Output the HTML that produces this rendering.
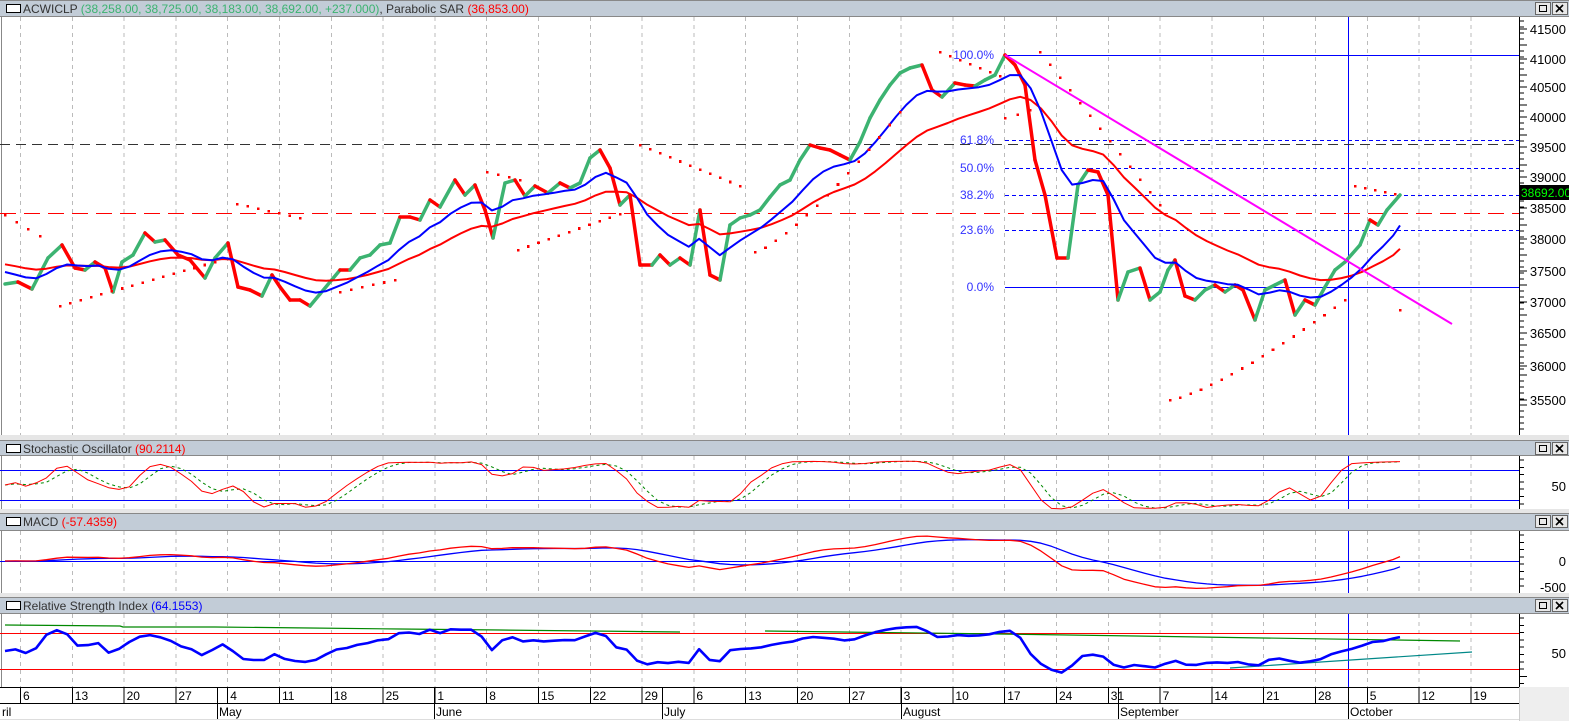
<!DOCTYPE html>
<html><head><meta charset="utf-8">
<style>
html,body{margin:0;padding:0;background:#fff;}
body{width:1569px;height:721px;overflow:hidden;font-family:"Liberation Sans",sans-serif;}
svg text{font-family:"Liberation Sans",sans-serif;}
</style></head><body>
<svg id="s" width="1569" height="721" xmlns="http://www.w3.org/2000/svg" shape-rendering="crispEdges">
<rect x="0" y="0" width="1569" height="721" fill="#fff"/>
</svg>
<script>
var NS="http://www.w3.org/2000/svg",S=document.getElementById('s');
function el(t,a,txt){var e=document.createElementNS(NS,t);for(var k in a)e.setAttribute(k,a[k]);if(txt!=null)e.textContent=txt;S.appendChild(e);return e;}
function line(x1,y1,x2,y2,c,w,d,sr){var a={x1:x1,y1:y1,x2:x2,y2:y2,stroke:c,'stroke-width':w||1};if(d)a['stroke-dasharray']=d;if(sr)a['shape-rendering']='auto';return el('line',a);}
function pl(pts,c,w,d){var a={points:pts.map(function(p){return p[0].toFixed(1)+','+p[1].toFixed(1)}).join(' '),fill:'none',stroke:c,'stroke-width':w,'stroke-linejoin':'round','shape-rendering':'auto'};if(d)a['stroke-dasharray']=d;return el('polyline',a);}
var AX=1519;
var panels=[[0,17,435],[440,456,509],[513,531,593],[597,614,687]];
var titles=[
 [['ACWICLP ','#333'],['(38,258.00, 38,725.00, 38,183.00, 38,692.00, +237.000)','#3cb371'],[', Parabolic SAR ','#333'],['(36,853.00)','#f00']],
 [['Stochastic Oscillator ','#333'],['(90.2114)','#f00']],
 [['MACD ','#333'],['(-57.4359)','#f00']],
 [['Relative Strength Index ','#333'],['(64.1553)','#00f']]];
el('rect',{x:0,y:435,width:1569,height:5,fill:'#e6e6e6'});
el('rect',{x:0,y:509,width:1569,height:4,fill:'#e6e6e6'});
el('rect',{x:0,y:593,width:1569,height:4,fill:'#e6e6e6'});
var ticks=[];for(var i=0;i<29;i++)ticks.push(20+i*51.8);
panels.forEach(function(p,i){
 var ht=p[0],pt=p[1],pb=p[2];
 el('rect',{x:0,y:ht,width:1569,height:pt-ht-1,fill:'#c2ccd7'});
 line(0,pt-0.5,1569,pt-0.5,'#888',1);
 line(0,ht+0.5,1569,ht+0.5,'#888',1);
 el('rect',{x:6.5,y:ht+4.5,width:14,height:8,fill:'#fff',stroke:'#000'});
 var t=el('text',{x:23,y:ht+13,'font-size':12});
 titles[i].forEach(function(s){var ts=document.createElementNS(NS,'tspan');ts.setAttribute('fill',s[1]);ts.textContent=s[0];t.appendChild(ts);});
 [1535,1552].forEach(function(bx,j){
  el('rect',{x:bx+0.5,y:ht+2.5,width:15,height:12,fill:'#e8e8e8',stroke:'#666'});
  if(j==0)el('rect',{x:bx+4.5,y:ht+5.5,width:7,height:6,fill:'none',stroke:'#000','stroke-width':1});
  else{line(bx+4,ht+5,bx+11,ht+12,'#000',1.6,null,1);line(bx+11,ht+5,bx+4,ht+12,'#000',1.6,null,1);}
 });
 ticks.forEach(function(x){line(x+0.5,pt,x+0.5,pb,'#bbb',1,'4,4');});
 line(1.5,pt,1.5,pb,'#888',1);
 line(AX+0.5,pt,AX+0.5,pb,'#000',1);
 for(var y=pt+4;y<pb;y+=(i==0?6:7.3))line(AX,y,AX+(((Math.round((y-pt)/6))%5==0)?8:5),y,'#000',1);
 line(1348.5,pt,1348.5,pb,'#00f',1);
});
[[41500,29],[41000,59],[40500,87],[40000,117],[39500,147],[39000,177],[38500,208],[38000,239],[37500,271],[37000,302],[36500,333],[36000,366],[35500,400]].forEach(function(a){
 line(AX,a[1],AX+8,a[1],'#000',1);
 el('text',{x:1566,y:a[1]+5,'font-size':13,'text-anchor':'end',fill:'#000'},a[0]);});
el('text',{x:1566,y:491,'font-size':13,'text-anchor':'end'},'50');
el('text',{x:1566,y:566,'font-size':13,'text-anchor':'end'},'0');
el('text',{x:1566,y:592,'font-size':13,'text-anchor':'end'},'-500');
el('text',{x:1566,y:658,'font-size':13,'text-anchor':'end'},'50');

line(0,144.5,AX,144.5,'#333',1,'10,6');
line(0,213.5,AX,213.5,'#f00',1.2,'16,8');
line(1005,55.5,AX,55.5,'#00f',1);
line(1005,287.5,AX,287.5,'#00f',1);
[140,168,195,230].forEach(function(y){line(1005,y+0.5,AX,y+0.5,'#00f',1,'4,3');});
[['100.0%',55],['61.8%',140],['50.0%',168],['38.2%',195],['23.6%',230],['0.0%',287]].forEach(function(a){
 el('text',{x:994,y:a[1]+4,'font-size':12,'text-anchor':'end',fill:'#33f'},a[0]);});

var P=[[5,284],[18,282],[32,289],[48,258],[62,245],[75,268],[85,270],[95,262],[105,268],[113,292],[122,262],[133,255],[145,233],[155,242],[165,240],[178,255],[190,260],[205,278],[215,258],[228,243],[238,287],[250,290],[262,296],[272,275],[280,287],[290,300],[300,300],[310,306],[320,294],[330,282],[340,270],[350,270],[360,258],[370,255],[380,245],[390,243],[400,217],[410,217],[420,220],[430,200],[440,207],[455,180],[465,195],[475,185],[485,210],[493,238],[505,183],[515,180],[525,196],[535,186],[548,193],[560,183],[570,188],[580,183],[590,158],[600,150],[610,168],[620,205],[630,195],[640,265],[652,265],[660,255],[670,265],[680,258],[690,265],[700,210],[710,275],[720,280],[730,225],[740,218],[750,215],[760,210],[770,197],[780,185],[790,180],[800,160],[810,145],[820,148],[830,150],[840,155],[850,160],[860,142],[870,118],[880,100],[890,85],[900,73],[910,68],[922,65],[932,90],[942,97],[955,83],[965,85],[975,86],[985,80],[995,75],[1005,55],[1015,65],[1025,85],[1035,160],[1045,195],[1057,258],[1068,258],[1078,185],[1088,170],[1098,172],[1108,195],[1118,300],[1128,272],[1140,268],[1150,300],[1160,292],[1168,270],[1175,260],[1185,296],[1195,300],[1205,290],[1215,285],[1225,292],[1235,285],[1243,290],[1255,320],[1265,290],[1275,285],[1285,280],[1295,315],[1305,300],[1315,305],[1325,287],[1335,270],[1345,262],[1360,245],[1370,220],[1378,225],[1387,210],[1400,195]];
for(var i=1;i<P.length;i++){
 var c=P[i][1]<P[i-1][1]?'#3cb371':'#f00';
 line(P[i-1][0],P[i-1][1],P[i][0],P[i][1],c,3.5,null,1).setAttribute('stroke-linecap','round');
}
function interp(x){for(var i=1;i<P.length;i++){if(x<=P[i][0]){var a=P[i-1],b=P[i];return a[1]+(b[1]-a[1])*(x-a[0])/(b[0]-a[0]);}}return P[P.length-1][1];}
var X=[],Y=[];for(var x=5;x<=1400.01;x+=10.36){X.push(x);Y.push(interp(x));}
X.push(1400);Y.push(195);
var N=X.length;
function ema(arr,n,init){var k=2/(n+1),o=[],v=init!=null?init:arr[0];for(var i=0;i<arr.length;i++){v=arr[i]*k+v*(1-k);o.push(v);}return o;}
var b=ema(Y,7,268),r=ema(Y,18,262);
pl(X.map(function(x,i){return [x,r[i]]}),'#f00',2);
pl(X.map(function(x,i){return [x,b[i]]}),'#00f',2);
line(1005,55,1452,324,'#f0f',2,null,1);
var segs=[[5,215,40,236],[60,306,215,262],[237,204,300,218],[340,292,395,280],[487,172,520,180],[518,250,620,214],[640,145,740,186],[755,252,900,112],[940,52,1000,76],[1005,118,1030,110],[1040,52,1160,205],[1170,400,1345,300],[1355,186,1395,194],[1400,310,1400,310]];
segs.forEach(function(s){
 var n=Math.max(1,Math.round((s[2]-s[0])/10.36));
 for(var j=0;j<=n;j++){var t=n?j/n:0;var x=s[0]+(s[2]-s[0])*t;var y=s[1]+(s[3]-s[1])*(s[1]>s[3]&&s[0]>=755&&s[0]<=1170?Math.pow(t,1.3):t);
  el('rect',{x:x-1.2,y:y-1.2,width:2.6,height:2.6,fill:'#f00'});}
});
el('rect',{x:1519,y:185,width:50,height:15,fill:'#000'});
el('text',{x:1521,y:197,'font-size':12,fill:'#0f0'},'38692.00');

var pr=Y.map(function(y){return 41000-(y-57)*16.7;});
var kr=[];for(var i=0;i<N;i++){var lo=1e9,hi=-1e9;for(var j=Math.max(0,i-13);j<=i;j++){lo=Math.min(lo,pr[j]-60);hi=Math.max(hi,pr[j]+60);}kr.push(100*(pr[i]-lo)/(hi-lo));}
function sma(a,n){return a.map(function(v,i){var s=0,c=0;for(var j=Math.max(0,i-n+1);j<=i;j++){s+=a[j];c++;}return s/c;});}
var K=sma(kr,3),D=sma(K,3);
function sy(v){return 510-v*0.5;}
line(0,470.5,AX,470.5,'#00f',1);line(0,500.5,AX,500.5,'#00f',1);
pl(X.map(function(x,i){return [x,sy(D[i])]}),'#080',1,'3,3');
pl(X.map(function(x,i){return [x,sy(K[i])]}),'#f00',1);
var e12=ema(pr,12,pr[0]),e26=ema(pr,26,pr[0]);
var m=e12.map(function(v,i){return v-e26[i];}),sg=ema(m,9,0);
function my(v){return 561-v*0.04;}
line(0,561.5,AX,561.5,'#00f',1);
pl(X.map(function(x,i){return [x,my(sg[i])]}),'#00f',1.3);
pl(X.map(function(x,i){return [x,my(m[i])]}),'#f00',1.3);
var ag=0,al=0,R=[];for(var i=0;i<N;i++){var d=i?pr[i]-pr[i-1]:0;var g=Math.max(d,0),l=Math.max(-d,0);if(i<1){ag=30;al=30;}ag=(ag*13+g)/14;al=(al*13+l)/14;R.push(100-100/(1+ag/al));}
function ry(v){return 651-(v-50)*0.9;}
line(0,633.5,AX,633.5,'#f00',1);line(0,669.5,AX,669.5,'#f00',1);
pl([[5,625],[120,626],[123,627],[215,627],[310,628],[400,629],[500,630],[680,632]],'#080',1.2);
pl([[765,631],[1000,634],[1200,637],[1460,641]],'#080',1.2);
pl([[1230,668],[1472,652]],'#088',1.2);
pl(X.map(function(x,i){return [x,ry(R[i])]}),'#00f',2.6);

el('rect',{x:0,y:687,width:AX,height:34,fill:'#fff'});
el('rect',{x:AX,y:687,width:50,height:34,fill:'#eee'});
line(0,687.5,AX,687.5,'#000',1);line(0,703.5,AX,703.5,'#000',1);line(0,719.5,AX,719.5,'#ddd',1);
var dl=['6','13','20','27','4','11','18','25','1','8','15','22','29','6','13','20','27','3','10','17','24','31','7','14','21','28','5','12','19'];
ticks.forEach(function(x,i){line(x+0.5,687,x+0.5,703,'#000',1);el('text',{x:x+3,y:700,'font-size':12},dl[i]);});
[[0,'ril'],[217,'May'],[434,'June'],[662,'July'],[901,'August'],[1118,'September'],[1348,'October']].forEach(function(a){
 if(a[0])line(a[0]+0.5,687,a[0]+0.5,719,'#000',1);
 el('text',{x:a[0]+2,y:716,'font-size':12},a[1]);});
line(AX+0.5,687,AX+0.5,721,'#ccc',1);
</script>
</body></html>
